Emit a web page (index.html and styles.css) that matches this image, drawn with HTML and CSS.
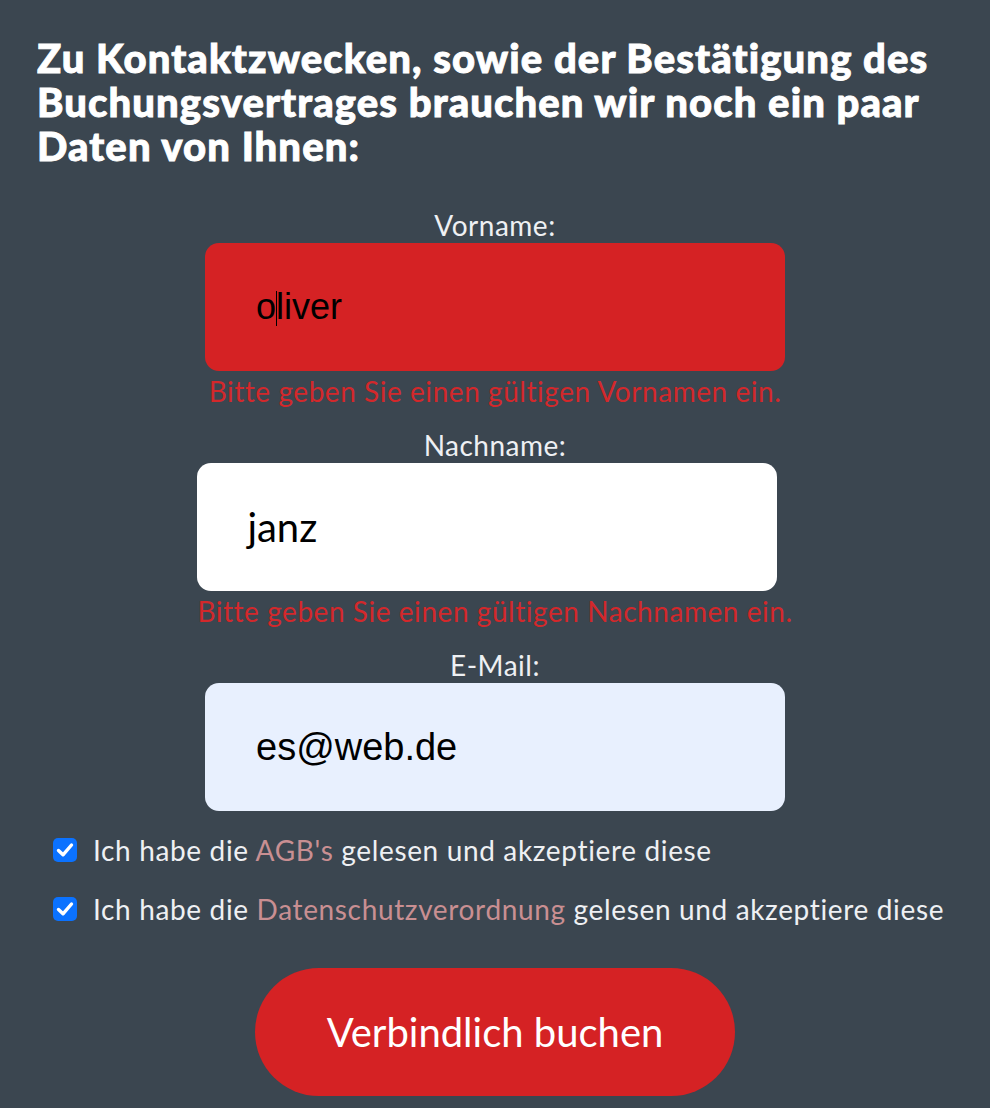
FILE: index.html
```html
<!DOCTYPE html>
<html lang="de">
<head>
<meta charset="utf-8">
<title>Buchung</title>
<link rel="stylesheet" href="styles.css">
</head>
<body>
<main class="page">
  <h1 class="intro">Zu Kontaktzwecken, sowie der Bestätigung des Buchungsvertrages brauchen wir noch ein paar Daten von Ihnen:</h1>
  <form class="form">
    <div class="field">
      <label class="label">Vorname:</label>
      <div class="input input-invalid"><span class="val val-arial">o<span class="caret"></span>liver</span></div>
      <div class="error">Bitte geben Sie einen gültigen Vornamen ein.</div>
    </div>
    <div class="field">
      <label class="label">Nachname:</label>
      <div class="input input-plain"><span class="val val-sans">janz</span></div>
      <div class="error">Bitte geben Sie einen gültigen Nachnamen ein.</div>
    </div>
    <div class="field field-last">
      <label class="label">E-Mail:</label>
      <div class="input input-autofill"><span class="val val-arial val-mail">es@web.de</span></div>
    </div>
    <div class="checks">
      <div class="check-row">
        <span class="box"><svg viewBox="0 0 24 24" width="24" height="24"><path d="M5.5 12.5 L10 16.8 L18.5 7" fill="none" stroke="#fff" stroke-width="3.4" stroke-linecap="round" stroke-linejoin="round"/></svg></span>
        <span class="check-text">Ich habe die <a class="link">AGB's</a> gelesen und akzeptiere diese</span>
      </div>
      <div class="check-row">
        <span class="box"><svg viewBox="0 0 24 24" width="24" height="24"><path d="M5.5 12.5 L10 16.8 L18.5 7" fill="none" stroke="#fff" stroke-width="3.4" stroke-linecap="round" stroke-linejoin="round"/></svg></span>
        <span class="check-text">Ich habe die <a class="link">Datenschutzverordnung</a> gelesen und akzeptiere diese</span>
      </div>
    </div>
    <div class="actions">
      <button type="button" class="submit">Verbindlich buchen</button>
    </div>
  </form>
</main>
</body>
</html>
```

FILE: styles.css
```css
html, body {
  margin: 0;
  padding: 0;
}
body {
  background: #3b4650;
  font-family: "Lato", "Open Sans", sans-serif;
  color: #eef0f3;
}
.page {
  padding: 36px 37px 0 37px;
}
.intro {
  margin: 0;
  font-size: 40px;
  line-height: 44px;
  font-weight: 900;
  letter-spacing: 1.1px;
  -webkit-text-stroke: 0.9px #ffffff;
  color: #ffffff;
  max-width: 912px;
}
.form {
  display: flex;
  flex-direction: column;
  align-items: center;
  margin-top: 42px;
}
.field {
  display: flex;
  flex-direction: column;
  align-items: flex-start;
  margin-bottom: 24px;
}
.field-last {
  margin-bottom: 24px;
}
.label {
  align-self: center;
  font-size: 28px;
  line-height: 30px;
  letter-spacing: 0.5px;
  color: #eef0f3;
  margin-bottom: 3px;
}
.input {
  width: 580px;
  height: 128px;
  border-radius: 14px;
  box-sizing: border-box;
  padding-left: 51px;
  display: flex;
  align-items: center;
  color: #000;
}
.input-invalid {
  background: #d52224;
}
.input-plain {
  background: #ffffff;
  padding-left: 50px;
}
.input-autofill {
  background: #e8f0fe;
}
.val {
  font-size: 36px;
  line-height: 40px;
  position: relative;
}
.val-arial {
  font-family: "Liberation Sans", Arial, sans-serif;
}
.val-mail {
  font-size: 38px;
}
.val-sans {
  font-family: "Lato", sans-serif;
  font-size: 40px;
}
.caret {
  display: inline-block;
  width: 1px;
  height: 35px;
  background: #000;
  vertical-align: -7px;
  margin: 0 -1px 0 0;
}
.error {
  align-self: center;
  margin-top: 5px;
  font-size: 28px;
  line-height: 30px;
  letter-spacing: 0.55px;
  color: #d3282b;
  white-space: nowrap;
}
.checks {
  align-self: stretch;
  display: flex;
  flex-direction: column;
  gap: 29px;
  padding-left: 16px;
}
.check-row {
  display: flex;
  align-items: center;
  gap: 16px;
  font-size: 28px;
  line-height: 30px;
  letter-spacing: 0.65px;
}
.box {
  width: 24px;
  height: 24px;
  border-radius: 5px;
  background: #0b72ff;
  display: flex;
  flex: none;
}
.check-text {
  color: #eef0f3;
}
.link {
  color: #c98f92;
  text-decoration: none;
}
.actions {
  margin-top: 44px;
  display: flex;
  justify-content: center;
}
.submit {
  width: 480px;
  height: 128px;
  border: none;
  border-radius: 64px;
  background: #d52224;
  color: #ffffff;
  font-family: "Lato", "Open Sans", sans-serif;
  font-size: 40px;
  padding: 0;
  cursor: pointer;
}
```
